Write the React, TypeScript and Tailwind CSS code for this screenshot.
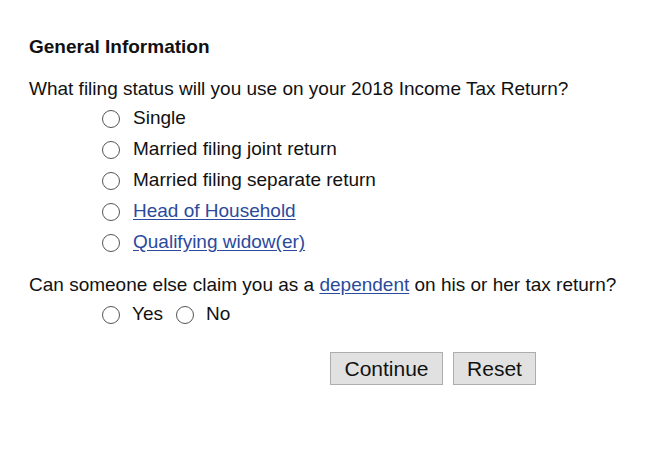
import React from "react";

const statuses = [
  { label: "Single" },
  { label: "Married filing joint return" },
  { label: "Married filing separate return" },
  { label: "Head of Household", link: true },
  { label: "Qualifying widow(er)", link: true },
];

function Radio() {
  return (
    <span className="inline-block h-[18px] w-[18px] shrink-0 rounded-full border-[1.5px] border-[#555] bg-white" />
  );
}

export default function App() {
  return (
    <div className="min-h-[450px] w-[645px] bg-white pl-[29px] pt-[36px] text-[19px] text-[#111] font-['Liberation_Sans',Arial,sans-serif]">
      <h2 className="text-[19px] font-bold leading-[22px]">General Information</h2>

      <p className="mt-[20px] leading-[22px]">
        What filing status will you use on your 2018 Income Tax Return?
      </p>
      <div className="mt-[3px] pl-[73px]">
        {statuses.map((s) => (
          <label key={s.label} className="flex h-[31px] items-center gap-[13px]">
            <Radio />
            {s.link ? (
              <a href="#" className="text-[#2b4a9c] underline underline-offset-2">
                {s.label}
              </a>
            ) : (
              <span>{s.label}</span>
            )}
          </label>
        ))}
      </div>

      <p className="mt-[16px] leading-[22px]">
        Can someone else claim you as a{" "}
        <a href="#" className="text-[#2b4a9c] underline underline-offset-2">
          dependent
        </a>{" "}
        on his or her tax return?
      </p>
      <div className="mt-[3px] flex h-[31px] items-center pl-[73px]">
        <label className="flex items-center gap-[12px]">
          <Radio />
          <span>Yes</span>
        </label>
        <label className="ml-[13px] flex items-center gap-[12px]">
          <Radio />
          <span>No</span>
        </label>
      </div>

      <div className="mt-[22px] flex gap-[10px] pl-[301px]">
        <button className="h-[33px] w-[113px] border border-[#adadad] bg-[#e1e1e1] text-[21px] text-[#111] font-['Liberation_Sans',Arial,sans-serif]">
          Continue
        </button>
        <button className="h-[33px] w-[83px] border border-[#adadad] bg-[#e1e1e1] text-[21px] text-[#111] font-['Liberation_Sans',Arial,sans-serif]">
          Reset
        </button>
      </div>
    </div>
  );
}
